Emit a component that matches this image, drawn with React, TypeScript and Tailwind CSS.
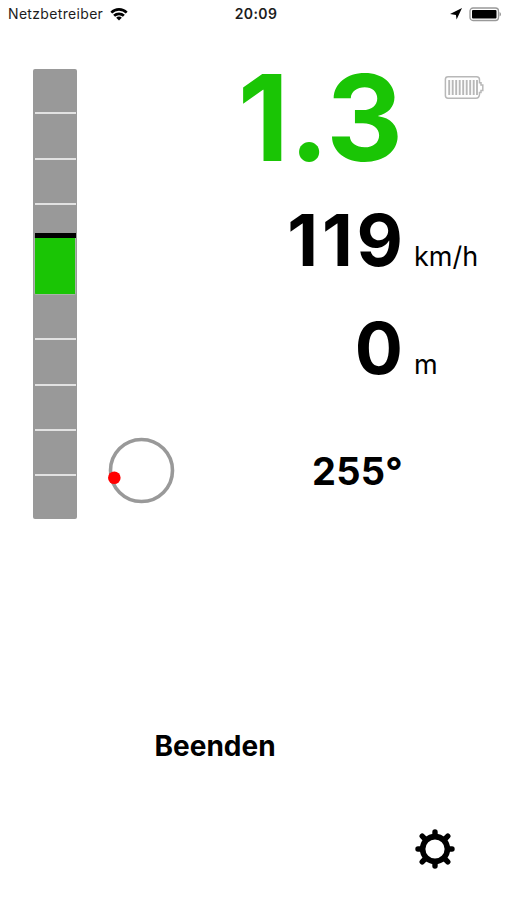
import type { ReactNode } from "react";

const TICKS = [43, 89, 134, 269, 315, 360, 405];

function StatusBar() {
  return (
    <header className="relative flex h-7 items-center justify-between pl-2 pr-[5px] text-[#1c1c1c]">
      <div className="flex items-center gap-[7px]">
        <span className="text-[14px] leading-7 tracking-[0.33px]">Netzbetreiber</span>
        <svg width="18" height="13" viewBox="0 0 18 13" fill="none" stroke="#000" strokeWidth="2.7">
          <path d="M1.300 4.600a11 11 0 0 1 15.400 0" />
          <path d="M4.100 7.800a7 7 0 0 1 9.800 0" />
          <path d="M9 12.600 6.200 9.800a3.800 3.800 0 0 1 5.600 0z" fill="#000" stroke="none" />
        </svg>
      </div>
      <span className="absolute left-1/2 top-0 w-20 -translate-x-[37.5px] text-center text-[14px] font-semibold leading-7 tracking-[0.4px]">
        20:09
      </span>
      <div className="flex items-center gap-[6px]">
        <svg width="13" height="13" viewBox="0 0 13 13">
          <path d="M12 0 6.600 11.500 5.900 7 0 6z" fill="#000" />
        </svg>
        <svg width="33" height="15" viewBox="0 0 33 15">
          <rect x="1" y="1" width="28.5" height="12.5" rx="3" fill="#fff" stroke="#999" strokeWidth="1.3" />
          <rect x="3" y="3" width="24.5" height="8.5" rx="1" fill="#000" />
          <path d="M30.500 5v4.500c1.200-.5 1.500-1.300 1.500-2.200S31.700 5.500 30.500 5z" fill="#999" />
        </svg>
      </div>
    </header>
  );
}

function Gauge() {
  return (
    <div className="relative h-[450px] w-11 shrink-0 rounded-[2px] bg-[#999999]">
      {TICKS.map((y) => (
        <div key={y} className="absolute inset-x-[1.5px] h-[2px] bg-[#e2e2e2]" style={{ top: y }} />
      ))}
      <div className="absolute left-[1.5px] top-[164px] h-[5px] w-[41px] bg-black" />
      <div className="absolute left-[1px] top-[169px] h-[57px] w-[42px] rounded-b-[2px] border border-t-0 border-[#a9b5a9] bg-[#1ac505]" />
    </div>
  );
}

function Compass() {
  return (
    <svg width="68" height="68" viewBox="0 0 68 68">
      <circle cx="34.5" cy="34.5" r="31" fill="none" stroke="#999" strokeWidth="3.6" />
      <circle cx="7.3" cy="41.8" r="6.3" fill="#f00" />
    </svg>
  );
}

function BatteryIcon() {
  return (
    <svg width="41" height="25" viewBox="0 0 41 25" fill="none" stroke="#b8b8b8">
      <path
        d="M4 1.700h28.500q3 0 3 3v3h1.500v2.200h1.800v5.500h-1.800v2.200h-1.500v2q-.5 3.600-3.500 3.600H4q-2.600 0-2.600-2.600V4.300Q1.400 1.700 4 1.700z"
        strokeWidth="1.5"
      />
      <path d="M5.200 5v15M8.700 5v15M12.200 5v15M15.700 5v15M19.200 5v15M22.700 5v15M26.200 5v15M29.700 5v15M33 5v15" strokeWidth="1.9" />
    </svg>
  );
}

function SettingsIcon() {
  return (
    <svg width="40" height="40" viewBox="-20 -20 40 40" fill="none" stroke="#000">
      <circle r="12.4" strokeWidth="5.6" />
      <path
        d="M0-13.500v-3.500M0 13.500v3.500M-13.500 0h-3.500M13.500 0h3.500M-10-10l-2.800-2.800M10-10l2.800-2.800M-10 10l-2.800 2.800M10 10l2.800 2.800"
        strokeWidth="5.4"
        strokeLinecap="round"
      />
    </svg>
  );
}

function Reading({ value, unit }: { value: string; unit: ReactNode }) {
  return (
    <div className="flex items-baseline justify-end">
      <span className="-mr-[3.8px] text-[71.5px] font-bold leading-none tracking-[3.8px]">{value}</span>
      <span className="ml-[11px] w-[93px] text-[27px] leading-none">{unit}</span>
    </div>
  );
}

export default function App() {
  return (
    <div className="flex h-[900px] w-[507px] flex-col overflow-hidden bg-white font-['Inter',sans-serif] text-black">
      <StatusBar />

      <main className="flex h-[491px] pl-[33px]">
        <div className="pt-[41px]">
          <Gauge />
        </div>
        <div className="flex w-[100px] items-end pb-[15px] pl-[30px]">
          <Compass />
        </div>
        <div className="flex flex-1 flex-col pt-[31px]">
          <div className="flex items-start justify-end">
            <span className="text-[119px] font-bold leading-none text-[#1ac505]">1.3</span>
            <div className="ml-10 w-[64px] pt-[16px] pl-px">
              <BatteryIcon />
            </div>
          </div>
          <div className="mt-[27px]">
            <Reading value="119" unit="km/h" />
          </div>
          <div className="mt-[36px]">
            <Reading value="0" unit="m" />
          </div>
          <div className="mt-[68px] pr-[104px] text-right text-[38px] font-bold leading-none tracking-[0.3px]">255°</div>
        </div>
      </main>

      <div className="mt-[213px] pl-[154.5px]">
        <button className="block text-[28px] font-bold leading-none">Beenden</button>
      </div>

      <footer className="mt-[69px] flex justify-end pr-[52px]">
        <button aria-label="Einstellungen">
          <SettingsIcon />
        </button>
      </footer>
    </div>
  );
}
